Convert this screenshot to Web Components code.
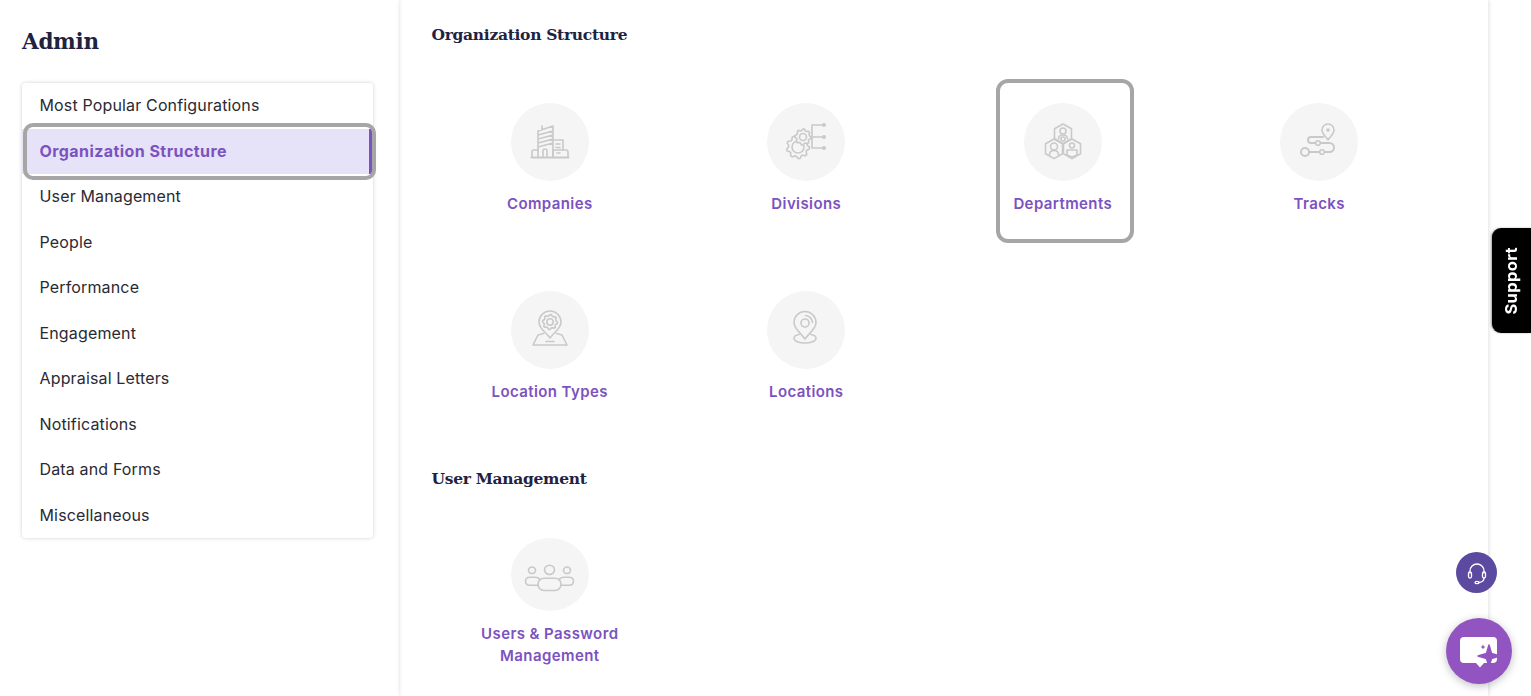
<!DOCTYPE html>
<html><head><meta charset="utf-8"><style>
html,body{margin:0;height:696px;overflow:hidden;background:#fff;font-family:Inter,"Liberation Sans",sans-serif}
</style></head><body>
<admin-page>
  <admin-sidebar slot="side">
    <side-item>Most Popular Configurations</side-item>
    <side-item active>Organization Structure</side-item>
    <side-item>User Management</side-item>
    <side-item>People</side-item>
    <side-item>Performance</side-item>
    <side-item>Engagement</side-item>
    <side-item>Appraisal Letters</side-item>
    <side-item>Notifications</side-item>
    <side-item>Data and Forms</side-item>
    <side-item>Miscellaneous</side-item>
  </admin-sidebar>
  <config-section heading="Organization Structure">
    <config-card icon="companies">Companies</config-card>
    <config-card icon="divisions">Divisions</config-card>
    <config-card icon="departments" focused>Departments</config-card>
    <config-card icon="tracks">Tracks</config-card>
    <config-card icon="loctypes">Location Types</config-card>
    <config-card icon="locations">Locations</config-card>
  </config-section>
  <config-section heading="User Management" class="second">
    <config-card icon="users" squat>Users &amp; Password Management</config-card>
  </config-section>
</admin-page>
<support-tab>Support</support-tab>
<headset-button></headset-button>
<chat-fab></chat-fab>
<script>
function gear(cx,cy,r,t){let d='';const n=t*4;for(let i=0;i<n;i++){const a=i/n*Math.PI*2,rr=(i%4<2)?r:r*.82;d+=(i?'L':'M')+(cx+rr*Math.cos(a)).toFixed(2)+' '+(cy+rr*Math.sin(a)).toFixed(2)}return d+'z'}
const ICONS={
companies:`<path d="M27 54V28l15-5v31M31 27v-4M27 32l15-4M27 36l15-4M27 40l15-4M27 44l15-4"/><path d="M42 37h10v10M45 41h4M45 44.500h4"/><path d="M21 54v-5q0-2 2-2h4M32 54v-6q0-2 2-2t2 2v6M42 54v-7h13q2 0 2 2v5M46 50h3"/><path d="M20.500 54.500h37" stroke-width="2"/>`,
divisions:`<path d="${gear(31,44,11.500,9)}"/><circle cx="31" cy="44" r="6"/><path d="${gear(36,34,8,8)}" fill="#f5f5f5"/><circle cx="36" cy="34" r="3.500"/><path d="M45 22v23M45 22h12M45 34h12M45 45h12"/><circle cx="57" cy="22" r="1.200" fill="#c6c6c6"/><circle cx="57" cy="34" r="1.200" fill="#c6c6c6"/><circle cx="57" cy="45" r="1.200" fill="#c6c6c6"/>`,
departments:`<path d="M39 21l8.500 4.800v10l-8.500 4.800-8.500-4.800v-10z"/><circle cx="39" cy="28" r="3"/><path d="M34.500 36q0-4 4.500-4t4.500 4"/><path d="M30 36l8.500 4.800v10L30 55.600l-8.500-4.800v-10z"/><circle cx="30" cy="43.500" r="3.500"/><path d="M25.500 52q0-4.500 4.500-4.500t4.500 4.500"/><path d="M48 36l8.500 4.800v10L48 55.600l-8.500-4.800v-10z"/><circle cx="48" cy="42.500" r="2.500"/><path d="M43 47h10v5l-5 2-5-2z"/><circle cx="39" cy="36" r="2"/>`,
tracks:`<path d="M48 37c-2-3-6-6-6-10a6 6 0 0 1 12 0c0 4-4 7-6 10z"/><circle cx="48" cy="27" r="1" fill="#c6c6c6"/><path d="M43 34H31a3 3 0 0 0 0 6h18.500a4.500 4.500 0 0 1 0 9H29" stroke-width="2"/><circle cx="38" cy="40" r="2.300" fill="#f5f5f5"/><circle cx="42" cy="49" r="2.300" fill="#f5f5f5"/><circle cx="25" cy="49" r="4" fill="#f5f5f5" stroke-width="2"/>`,
loctypes:`<path d="M39 47c-4-6-11-9-11-16a11 11 0 0 1 22 0c0 7-7 10-11 16z"/><path d="${gear(39,31,7.500,8)}"/><circle cx="39" cy="31" r="3.200"/><path d="M32.500 42.500L27 44l-5 10h34l-5-10-5.500-1.500"/><path d="M35 50.500h8"/>`,
locations:`<path d="M38 48c-4-6-11-10-11-16.500a11 11 0 0 1 22 0C49 38 42 42 38 48z"/><circle cx="38" cy="32" r="4"/><path d="M38.500 24.500a7.500 7.500 0 0 1 7 7"/><path d="M32 43.500c-3 .5-5 2-5 3.800 0 2.700 5 4.700 11 4.700s11-2 11-4.700c0-1.800-2-3.300-5-3.800"/>`,
users:`<circle cx="38.500" cy="34" r="5"/><circle cx="21" cy="34.500" r="3.500"/><circle cx="56" cy="34.500" r="3.500"/><rect x="27" y="43" width="23" height="13" rx="6"/><path d="M27 50.500H19q-4.500 0-4.500-4.300T19 42h5q3.500 0 5 2.500M50 50.500h8q4.500 0 4.500-4.300T58 42h-5q-3.500 0-5 2.500"/>`
};
function def(n,html,init){customElements.define(n,class extends HTMLElement{constructor(){super();this.attachShadow({mode:'open'}).innerHTML=typeof html==='function'?html(this):html;}connectedCallback(){if(init)init(this)}})}

def('admin-page',`<style>:host{display:flex;width:1488px;height:696px}
main{width:1089px;height:696px;box-sizing:border-box;padding:23px 0 0 22.500px;box-shadow:1px 0 4px rgba(0,0,0,.12);flex:none}
</style><slot name="side"></slot><main><slot></slot></main>`);

def('admin-sidebar',`<style>:host{display:block;width:399px;height:696px;flex:none;box-shadow:1px 0 3px rgba(0,0,0,.09)}
h1{font:700 21.500px/30px "DejaVu Serif",serif;color:#1f2340;margin:0;padding:27px 0 0 22px;letter-spacing:-.3px}
.list{margin:26px 0 0 22px;width:351px;background:#fff;border-radius:4px;box-shadow:0 0 4px rgba(0,0,0,.18)}
</style><h1>Admin</h1><div class="list"><slot></slot></div>`);

def('side-item',`<style>:host{display:block;height:45.500px;position:relative;box-sizing:border-box;font:400 16px/45px Inter,sans-serif;color:#2a2a33;padding-left:17.500px;letter-spacing:.15px}
:host([active]){font-weight:700;color:#7b52c0;background:#e6e3f9;letter-spacing:.43px}
:host([active])::before{content:"";position:absolute;right:1px;top:0;bottom:0;width:3px;background:#7b52c0}
:host([active])::after{content:"";position:absolute;left:1px;right:-3px;top:-5.500px;bottom:-6px;border:4px solid #a6a6a6;border-radius:10px;box-sizing:border-box}
</style><slot></slot>`);

def('config-section',el=>`<style>:host{display:block}
h2{font:700 15.500px/24px "DejaVu Serif",serif;color:#1f2340;margin:0 0 33px 10px;letter-spacing:-.3px}
:host(.second) h2{margin:37px 0 24px 10px}
.grid{display:grid;grid-template-columns:repeat(4,256.500px);row-gap:26px}
</style><h2>${el.getAttribute('heading')}</h2><div class="grid"><slot></slot></div>`);

def('config-card',el=>`<style>:host{display:flex;flex-direction:column;align-items:center;justify-self:center;width:136px;height:162px;box-sizing:border-box;padding-top:23px;border-radius:10px;font:600 15px/22px Inter,sans-serif;color:#7b52c0;text-align:center;letter-spacing:.4px}
:host([focused]){width:138px;height:164px;margin:-1px 0 -1px 5px;border:4px solid #a6a6a6;padding:20px 5px 0 0;border-radius:12px}
:host([squat]){width:160px}
.c{width:78px;height:78px;border-radius:50%;background:#f5f5f5;flex:none;margin-bottom:12px}
:host([squat]) .c{height:73px}
svg{display:block;width:100%;height:100%;fill:none;stroke:#c9c9c9;stroke-width:1.600;stroke-linecap:round;stroke-linejoin:round}
</style><div class="c"><svg viewBox="0 0 78 78" preserveAspectRatio="none">${ICONS[el.getAttribute('icon')]}</svg></div><div><slot></slot></div>`);

def('support-tab',`<style>:host{position:fixed;left:1492px;top:228px;width:39px;height:105px;background:#000;border-radius:9px 0 0 9px;color:#fff;font:700 16.500px/39px Inter,sans-serif;letter-spacing:.35px;display:flex;align-items:center;justify-content:center;box-shadow:-1px 0 2px rgba(0,0,0,.35)}
span{writing-mode:vertical-rl;transform:rotate(180deg);line-height:39px}
</style><span><slot></slot></span>`);

def('headset-button',`<style>:host{position:fixed;left:1456px;top:552px;width:41px;height:41px;border-radius:50%;background:#5b4a9f;display:flex;align-items:center;justify-content:center}
svg{width:24px;height:24px;fill:none;stroke:#fff;stroke-width:1.300;stroke-linecap:round}
</style><svg viewBox="0 0 24 24"><path d="M5 12V10a7 7 0 0 1 14 0v2"/><rect x="3.500" y="11" width="3" height="6" rx="1.500"/><rect x="17.500" y="11" width="3" height="6" rx="1.500"/><path d="M19 17q0 4-5 4.500"/><ellipse cx="12" cy="21.500" rx="2" ry="1.200"/></svg>`);

def('chat-fab',`<style>:host{position:fixed;left:1446px;top:618px;width:66px;height:66px;border-radius:50%;background:#9254c1;box-shadow:0 2px 8px rgba(0,0,0,.25)}
svg{display:block;width:66px;height:66px}
</style><svg viewBox="0 0 66 66"><path d="M18 19h29q4 0 4 4v18q0 4-4 4H38l-4 4.500-4-4.500H18q-4 0-4-4V23q0-4 4-4z" fill="#fff"/><path d="M43 27l2.500 8.500 8.500 2.500-8.500 2.500L43 49l-2.500-8.500L32 38l8.500-2.500z" fill="#9254c1" stroke="#9254c1" stroke-width="1.500" stroke-linejoin="round"/><path d="M37 26.500l.8 1.700 1.700.8-1.700.8-.8 1.700-.8-1.700-1.700-.8 1.700-.8z" fill="#9254c1"/></svg>`);
</script>
</body></html>
